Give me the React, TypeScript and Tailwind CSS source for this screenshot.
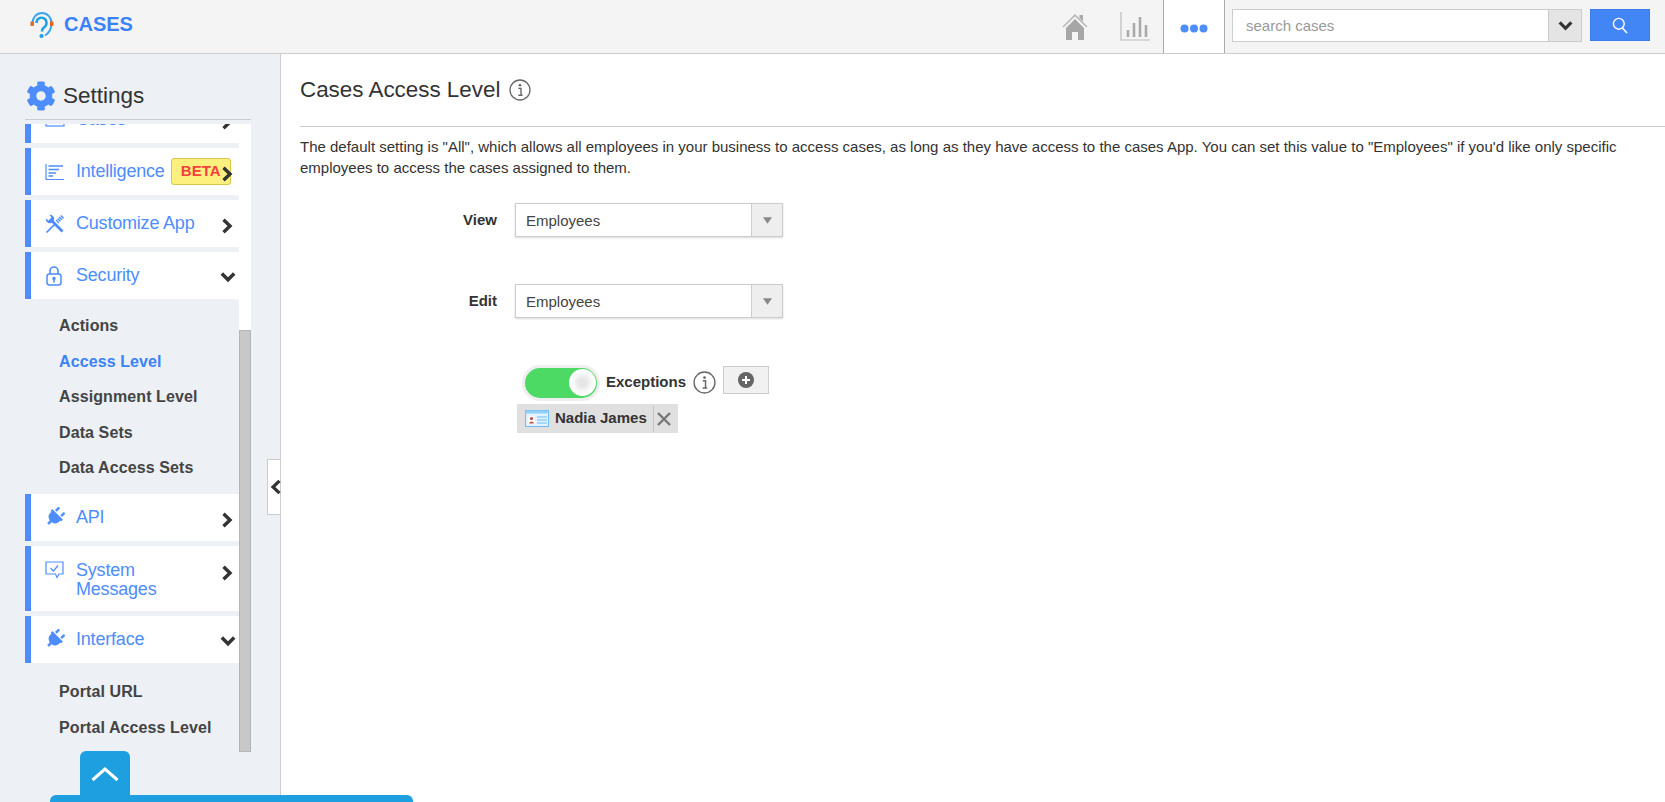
import { FaCog, FaPlug } from "react-icons/fa";

const font = "font-['Liberation_Sans',Arial,sans-serif]";

function ChevronRight() {
  return (
    <svg width="12" height="16" viewBox="0 0 12 16" className="shrink-0">
      <path d="M2.5 1.8 L9 8 L2.5 14.2" fill="none" stroke="#333" strokeWidth="3.4" />
    </svg>
  );
}

function ChevronDown({ size = 16 }: { size?: number }) {
  return (
    <svg width={size} height={(size * 3) / 4} viewBox="0 0 16 12" className="shrink-0">
      <path d="M1.8 2.5 L8 8.8 L14.2 2.5" fill="none" stroke="#333" strokeWidth="3.4" />
    </svg>
  );
}

function InfoIcon({ size = 22 }: { size?: number }) {
  return (
    <svg width={size} height={size} viewBox="0 0 22 22" className="shrink-0">
      <circle cx="11" cy="11" r="10" fill="none" stroke="#666" strokeWidth="1.3" />
      <circle cx="11" cy="6.3" r="1.3" fill="#666" />
      <path d="M9.3 9.4 H12 V16 M9.3 16.2 H13.6" fill="none" stroke="#666" strokeWidth="1.4" />
    </svg>
  );
}

function ReportIcon() {
  return (
    <svg width="20" height="18" viewBox="0 0 20 18">
      <path d="M1 1 V16.5 H19" fill="none" stroke="#4d8dff" strokeWidth="1.2" />
      <path d="M3.5 3 H18 M3.5 6.5 H14 M3.5 10 H11 M3.5 13 H8" fill="none" stroke="#4d8dff" strokeWidth="1.3" />
    </svg>
  );
}

function ToolsIcon() {
  return (
    <svg width="20" height="20" viewBox="0 0 20 20">
      <circle cx="5" cy="5" r="4.2" fill="#4d8dff" />
      <path d="M3.5 -0.5 L-0.5 3.5 L3.6 6.4 L6.4 3.6 Z" fill="#fff" />
      <path d="M5.5 5.5 L17.5 17.5" stroke="#4d8dff" strokeWidth="2.8" />
      <path d="M1.5 18.5 L10.5 9.5" stroke="#4d8dff" strokeWidth="1.7" />
      <path d="M12 8 L18 2" stroke="#4d8dff" strokeWidth="4" strokeDasharray="1.4 0.8" />
    </svg>
  );
}

function LockIcon() {
  return (
    <svg width="16" height="20" viewBox="0 0 16 20">
      <path d="M4 8 V5 A4 4 0 0 1 12 5 V8" fill="none" stroke="#4d8dff" strokeWidth="1.6" />
      <rect x="1" y="8" width="14" height="11" rx="2.5" fill="none" stroke="#4d8dff" strokeWidth="1.5" />
      <circle cx="8" cy="12.5" r="1.7" fill="#4d8dff" />
      <path d="M8 13 V16.5" stroke="#4d8dff" strokeWidth="1.6" />
    </svg>
  );
}

function MessageIcon() {
  return (
    <svg width="19" height="18" viewBox="0 0 19 18">
      <path d="M1 1 H18 V13 H14 L12 16.5 L10.5 13 H1 Z" fill="none" stroke="#4d8dff" strokeWidth="1.2" />
      <path d="M5.5 7 L8.5 10 L13 4.5" fill="none" stroke="#4d8dff" strokeWidth="1.2" />
    </svg>
  );
}

function CasesIcon() {
  return (
    <svg width="20" height="14" viewBox="0 0 20 14">
      <rect x="1" y="1" width="18" height="12" fill="none" stroke="#4d8dff" strokeWidth="1.2" />
    </svg>
  );
}

function PlugIcon() {
  return <FaPlug className="rotate-45 text-[20px] text-[#4d8dff]" />;
}

function NavItem({ icon, children, open = false, badge = false, tall = false }: { icon: React.ReactNode; children: React.ReactNode; open?: boolean; badge?: boolean; tall?: boolean }) {
  return (
    <div className={`relative flex border-l-[6px] border-[#4d8dff] bg-white pl-[14px] ${tall ? "h-[65px] items-start pt-[15px]" : "h-[47px] items-center"}`}>
      <div className="flex w-[31px] shrink-0 justify-start">{icon}</div>
      <span className={`text-[18px] leading-[19px] text-[#4d8dff] tracking-[-0.2px] ${tall ? "w-[100px]" : ""}`}>{children}</span>
      {badge && <span className="ml-[6px] flex h-[27px] w-[60px] items-center justify-center rounded-[3px] border border-[#d9c74a] bg-[#fdf07f] text-[15px] font-bold text-[#f43f3f]">BETA</span>}
      <span className={`absolute ${open ? "right-[3px] top-[19px]" : tall ? "right-[6px] top-[19px]" : "right-[6px] top-[18px]"}`}>{open ? <ChevronDown /> : <ChevronRight />}</span>
    </div>
  );
}

function SubItem({ active = false, children }: { active?: boolean; children: React.ReactNode }) {
  return <div className={`h-[35.5px] pl-[34px] text-[16px] font-bold leading-[35.5px] tracking-[0.1px] ${active ? "text-[#3b82f6]" : "text-[#444]"}`}>{children}</div>;
}

function SelectBox({ value }: { value: string }) {
  return (
    <div className="flex h-[34px] w-[268px] border border-[#ccc] bg-white shadow-[0_1px_2px_rgba(0,0,0,0.15)]">
      <div className="flex-1 pl-[10px] text-[15px] leading-[33px] text-[#444]">{value}</div>
      <div className="flex w-[31px] items-center justify-center border-l border-[#ccc] bg-[#eee]">
        <svg width="9" height="7" viewBox="0 0 10 7"><path d="M0 0 H10 L5 7 Z" fill="#888" /></svg>
      </div>
    </div>
  );
}

export default function App() {
  return (
    <div className={`${font} flex h-[802px] w-[1665px] flex-col overflow-hidden bg-white text-[#333]`}>
      <header className="flex h-[54px] shrink-0 items-center border-b border-[#ccc] bg-[#f4f4f4]">
        <div className="ml-[29px] mb-[4px] flex items-center">
          <svg width="26" height="28" viewBox="0 0 26 28">
            <path d="M3.5 12 A9.5 10 0 0 1 22.5 12 C22.5 18 20 22 16 24.5" fill="none" stroke="#3aa5ee" strokeWidth="2" />
            <path d="M7.5 12 A5 5.2 0 1 1 15.5 16 C14 17 13 18 13 20.5" fill="none" stroke="#1e9fdf" strokeWidth="2.4" />
            <circle cx="12.5" cy="25" r="2.1" fill="#1e9fdf" />
            <rect x="1.5" y="10.5" width="3.4" height="4.4" fill="#e8641e" />
            <rect x="21" y="10.5" width="3.4" height="4.4" fill="#e8641e" />
          </svg>
          <span className="mb-[1px] ml-[9px] text-[20px] font-bold text-[#3b82f6]">CASES</span>
        </div>
        <div className="ml-auto flex h-full items-stretch">
          <div className="flex items-center">
            <svg width="26" height="27" viewBox="0 0 26 27" className="mr-[32px]">
              <path d="M17.5 2 H21 V8.5 L17.5 5 Z" fill="#aaa" />
              <path d="M13 1 L25.5 13.5 L24.5 14.5 L13 3.2 L1.5 14.5 L0.5 13.5 Z" fill="#b5b5b5" />
              <path d="M4 15 L13 6 L22 15 V27 H16 V19 H10 V27 H4 Z" fill="#a6a6a6" />
            </svg>
            <svg width="30" height="29" viewBox="0 0 30 29" className="mr-[13px]">
              <path d="M1 0 V28 H30" fill="none" stroke="#bbb" strokeWidth="1.2" />
              <path d="M8 25 V18 M14 25 V11 M20 25 V5 M26 25 V13" fill="none" stroke="#aaa" strokeWidth="2.6" />
            </svg>
          </div>
          <div className="flex w-[62px] items-center justify-center border-x border-[#aaa] bg-white">
            <svg width="28" height="9" viewBox="0 0 28 9" className="mt-[3px]">
              <circle cx="4.5" cy="4.5" r="4" fill="#4d8dff" />
              <circle cx="14" cy="4.5" r="4" fill="#4d8dff" />
              <circle cx="23.5" cy="4.5" r="4" fill="#4d8dff" />
            </svg>
          </div>
          <div className="ml-[7px] mt-[9px] flex h-[33px] w-[350px] border border-[#ccc] bg-white">
            <div className="flex-1 pl-[13px] text-[15px] leading-[31px] text-[#999]">search cases</div>
            <div className="flex w-[33px] items-center justify-center border-l border-[#ccc] bg-[#e4e4e4]"><ChevronDown size={15} /></div>
          </div>
          <div className="ml-[8px] mr-[15px] mt-[9px] flex h-[32px] w-[60px] items-center justify-center border border-[#3b7de8] bg-[#4285f4]">
            <svg width="16" height="17" viewBox="0 0 16 17">
              <circle cx="6.8" cy="6.8" r="5.4" fill="none" stroke="#fff" strokeWidth="1.4" />
              <path d="M10.5 11 L15 16" stroke="#fff" strokeWidth="1.6" />
            </svg>
          </div>
        </div>
      </header>
      <div className="flex min-h-0 flex-1">
        <aside className="relative flex w-[281px] shrink-0 flex-col border-r border-[#ccc] bg-[#edf0f4] pl-[25px]">
          <div className="flex h-[66px] w-[226px] shrink-0 items-start border-b border-[#ccc] pt-[27px]">
            <FaCog className="ml-[1px] text-[30px] text-[#4d8dff]" />
            <span className="ml-[7px] mt-[1px] text-[22.5px] leading-[28px] text-[#333]">Settings</span>
          </div>
          <div className="mt-[4px] flex h-[628px] w-[226px]">
            <div className="w-[214px] overflow-hidden">
              <div className="mt-[-28px] flex flex-col gap-[5px]">
                <NavItem icon={<CasesIcon />}>Cases</NavItem>
                <NavItem icon={<ReportIcon />} badge>Intelligence</NavItem>
                <NavItem icon={<ToolsIcon />}>Customize App</NavItem>
                <div>
                  <NavItem icon={<span className="ml-[1px] flex"><LockIcon /></span>} open>Security</NavItem>
                  <div className="pb-[3px] pt-[9px]">
                    <SubItem>Actions</SubItem>
                    <SubItem active>Access Level</SubItem>
                    <SubItem>Assignment Level</SubItem>
                    <SubItem>Data Sets</SubItem>
                    <SubItem>Data Access Sets</SubItem>
                  </div>
                </div>
                <NavItem icon={<PlugIcon />}>API</NavItem>
                <NavItem icon={<MessageIcon />} tall>System Messages</NavItem>
                <div>
                  <NavItem icon={<PlugIcon />} open>Interface</NavItem>
                  <div className="pt-[11px]">
                    <SubItem>Portal URL</SubItem>
                    <div className="mt-[1px]"><SubItem>Portal Access Level</SubItem></div>
                  </div>
                </div>
              </div>
            </div>
            <div className="flex w-[12px] flex-col bg-white">
              <div className="mt-[206px] flex-1 border border-[#b5b5b5] bg-[#c8c8c8]" />
            </div>
          </div>
          <div className="absolute left-[80px] top-[697px] flex h-[45px] w-[50px] items-center justify-center rounded-t-[6px] bg-[#1e9fdf]">
            <svg width="30" height="18" viewBox="0 0 30 18"><path d="M2.5 15 L15 4 L27.5 15" fill="none" stroke="#fff" strokeWidth="3" /></svg>
          </div>
          <div className="absolute left-[50px] top-[741px] z-10 h-[11px] w-[363px] rounded-t-[6px] bg-[#1e9fdf]" />
          <button className="absolute right-[-1px] top-[405px] flex h-[56px] w-[14px] items-center justify-center border border-[#ccc] bg-white">
            <svg width="12" height="16" viewBox="0 0 12 16" className="ml-[3px] shrink-0"><path d="M9.5 1.8 L3 8 L9.5 14.2" fill="none" stroke="#333" strokeWidth="3.2" /></svg>
          </button>
        </aside>
        <main className="min-w-0 flex-1 pl-[19px]">
          <div className="flex h-[73px] items-start border-b border-[#ccc] pt-[23px]">
            <h1 className="text-[22.4px] font-normal leading-[26px] text-[#333]">Cases Access Level</h1>
            <span className="ml-[9px] mt-[2px]"><InfoIcon /></span>
          </div>
          <p className="mt-[9px] w-[1340px] text-[15px] leading-[21px] text-[#333]">
            The default setting is "All", which allows all employees in your business to access cases, as long as they have access to the cases App. You can set this value to "Employees" if you'd like only specific employees to access the cases assigned to them.
          </p>
          <div className="mt-[25px] flex items-center">
            <label className="w-[197px] text-right text-[15px] font-bold text-[#333]">View</label>
            <div className="ml-[18px]"><SelectBox value="Employees" /></div>
          </div>
          <div className="mt-[47px] flex items-center">
            <label className="w-[197px] text-right text-[15px] font-bold text-[#333]">Edit</label>
            <div className="ml-[18px]"><SelectBox value="Employees" /></div>
          </div>
          <div className="ml-[225px] mt-[47px] flex h-[35px] items-center">
            <div className="flex h-[30px] w-[72px] items-center justify-end rounded-full bg-[#4cd964] pr-[1px] shadow-[0_0_0_3px_#eee]">
              <span className="h-[27px] w-[27px] rounded-full bg-[radial-gradient(circle,#e6e6e6_20%,#f6f6f6_45%,#fff_62%)]" />
            </div>
            <span className="ml-[9px] text-[15px] font-bold text-[#333]">Exceptions</span>
            <span className="ml-[7px]"><InfoIcon size={23} /></span>
            <div className="mb-[6px] ml-[7px] flex h-[28px] w-[46px] items-center justify-center border border-[#ccc] bg-[#f1f1f1]">
              <svg width="16" height="16" viewBox="0 0 16 16">
                <circle cx="8" cy="8" r="8" fill="#666" />
                <path d="M8 4 V12 M4 8 H12" stroke="#fff" strokeWidth="2" />
              </svg>
            </div>
          </div>
          <div className="ml-[217px] mt-[4px] flex h-[29px] w-[161px] items-center bg-[#e0e0e0] pl-[8px]">
            <svg width="24" height="17" viewBox="0 0 24 17">
              <rect x="0.5" y="0.5" width="23" height="16" fill="#e3f2fd" stroke="#6cbcf5" />
              <rect x="0.5" y="0.5" width="23" height="3" fill="#8fd0fb" />
              <rect x="3" y="6" width="7" height="8" fill="#fff" />
              <circle cx="6.5" cy="8.5" r="1.6" fill="#b5533c" />
              <path d="M4 13.5 C4 11 9 11 9 13.5 Z" fill="#b5533c" />
              <path d="M12 7 H22 M12 10 H22 M12 13 H22" stroke="#6cbcf5" strokeWidth="1.2" />
            </svg>
            <span className="ml-[6px] text-[15px] font-bold text-[#333]">Nadia James</span>
            <span className="ml-[6px] h-[26px] w-px bg-[#c4c4c4]" />
            <svg width="14" height="14" viewBox="0 0 14 14" className="ml-[3px]"><path d="M1 1 L13 13 M13 1 L1 13" stroke="#777" strokeWidth="2.4" /></svg>
          </div>
        </main>
      </div>
    </div>
  );
}
